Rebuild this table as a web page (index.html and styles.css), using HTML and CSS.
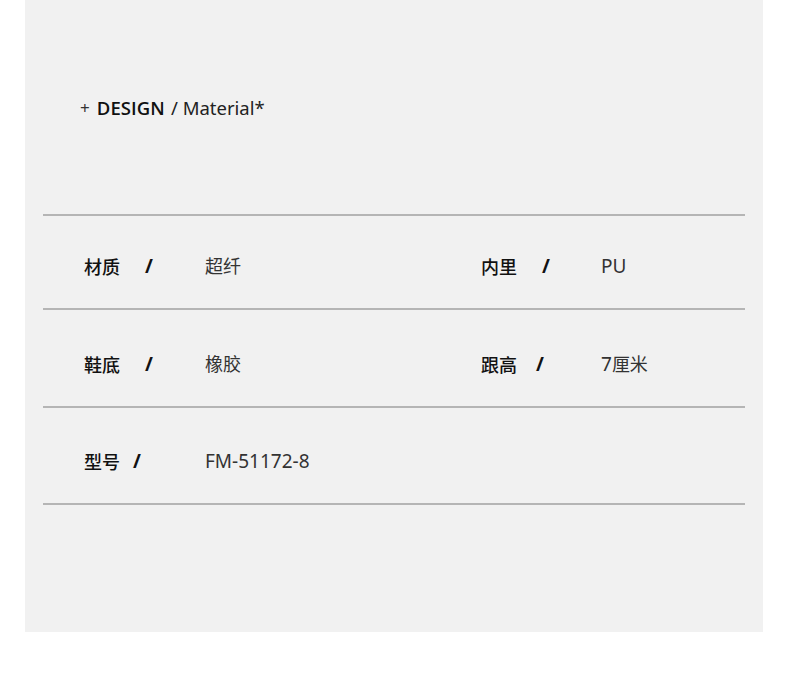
FILE: index.html
```html
<!DOCTYPE html>
<html lang="zh-CN">
<head>
<meta charset="utf-8">
<title>DESIGN / Material</title>
<link rel="stylesheet" href="styles.css">
</head>
<body>
<div class="panel">
  <div class="heading"><span class="plus">+</span><span class="design">DESIGN</span><span class="material">/ Material*</span></div>
  <div class="table">
    <div class="row row-1">
      <div class="cell cell-left">
        <div class="key"><span class="label">材质</span><span class="slash slash-wide">/</span></div>
        <div class="value">超纤</div>
      </div>
      <div class="cell cell-right">
        <div class="key"><span class="label">内里</span><span class="slash slash-wide">/</span></div>
        <div class="value latin">PU</div>
      </div>
    </div>
    <div class="row row-2">
      <div class="cell cell-left">
        <div class="key"><span class="label">鞋底</span><span class="slash slash-wide">/</span></div>
        <div class="value">橡胶</div>
      </div>
      <div class="cell cell-right">
        <div class="key"><span class="label">跟高</span><span class="slash slash-mid">/</span></div>
        <div class="value"><span class="latin">7</span>厘米</div>
      </div>
    </div>
    <div class="row row-3">
      <div class="cell cell-left">
        <div class="key"><span class="label">型号</span><span class="slash slash-narrow">/</span></div>
        <div class="value latin">FM-51172-8</div>
      </div>
    </div>
  </div>
</div>
</body>
</html>
```
FILE: styles.css
```css
html, body {
  margin: 0;
  padding: 0;
  background: #ffffff;
}
body {
  font-family: "Noto Sans", "Noto Sans CJK SC", sans-serif;
  color: #222;
}
.panel {
  margin-left: 25px;
  width: 738px;
  height: 632px;
  background: #f1f1f1;
  padding-top: 94px;
  box-sizing: border-box;
}
.heading {
  margin-left: 55px;
  height: 26px;
  display: flex;
  align-items: center;
  font-size: 18px;
  color: #1a1a1a;
}
.plus {
  font-size: 17px;
  margin-right: 7px;
  color: #333;
}
.design {
  font-family: "Open Sans", "Noto Sans", sans-serif;
  font-size: 18.5px;
  font-weight: 600;
  margin-right: 6px;
  letter-spacing: 0.1px;
  color: #111;
}
.material {
  font-size: 18.5px;
  color: #222;
}
.table {
  margin: 94px 18px 0 18px;
  border-top: 2px solid #b5b5b5;
}
.row {
  display: flex;
  box-sizing: border-box;
  border-bottom: 2px solid #b5b5b5;
  padding-left: 41px;
  font-size: 18px;
  line-height: 24px;
}
.row-1 { height: 94px; padding-top: 38px; }
.row-2 { height: 98px; padding-top: 42px; }
.row-3 { height: 97px; padding-top: 41px; }
.cell {
  display: flex;
}
.cell-left { width: 397px; }
.key {
  display: flex;
  width: 121px;
}
.cell-right .key { width: 120px; }
.label {
  font-family: "Noto Sans CJK SC", sans-serif;
  font-weight: 500;
  color: #111;
}
.slash {
  font-weight: 700;
  font-size: 19px;
  color: #111;
}
.slash-wide { margin-left: 25px; }
.slash-mid { margin-left: 19px; }
.slash-narrow { margin-left: 13px; }
.value {
  color: #333;
}
.latin {
  font-size: 19px;
}
```
